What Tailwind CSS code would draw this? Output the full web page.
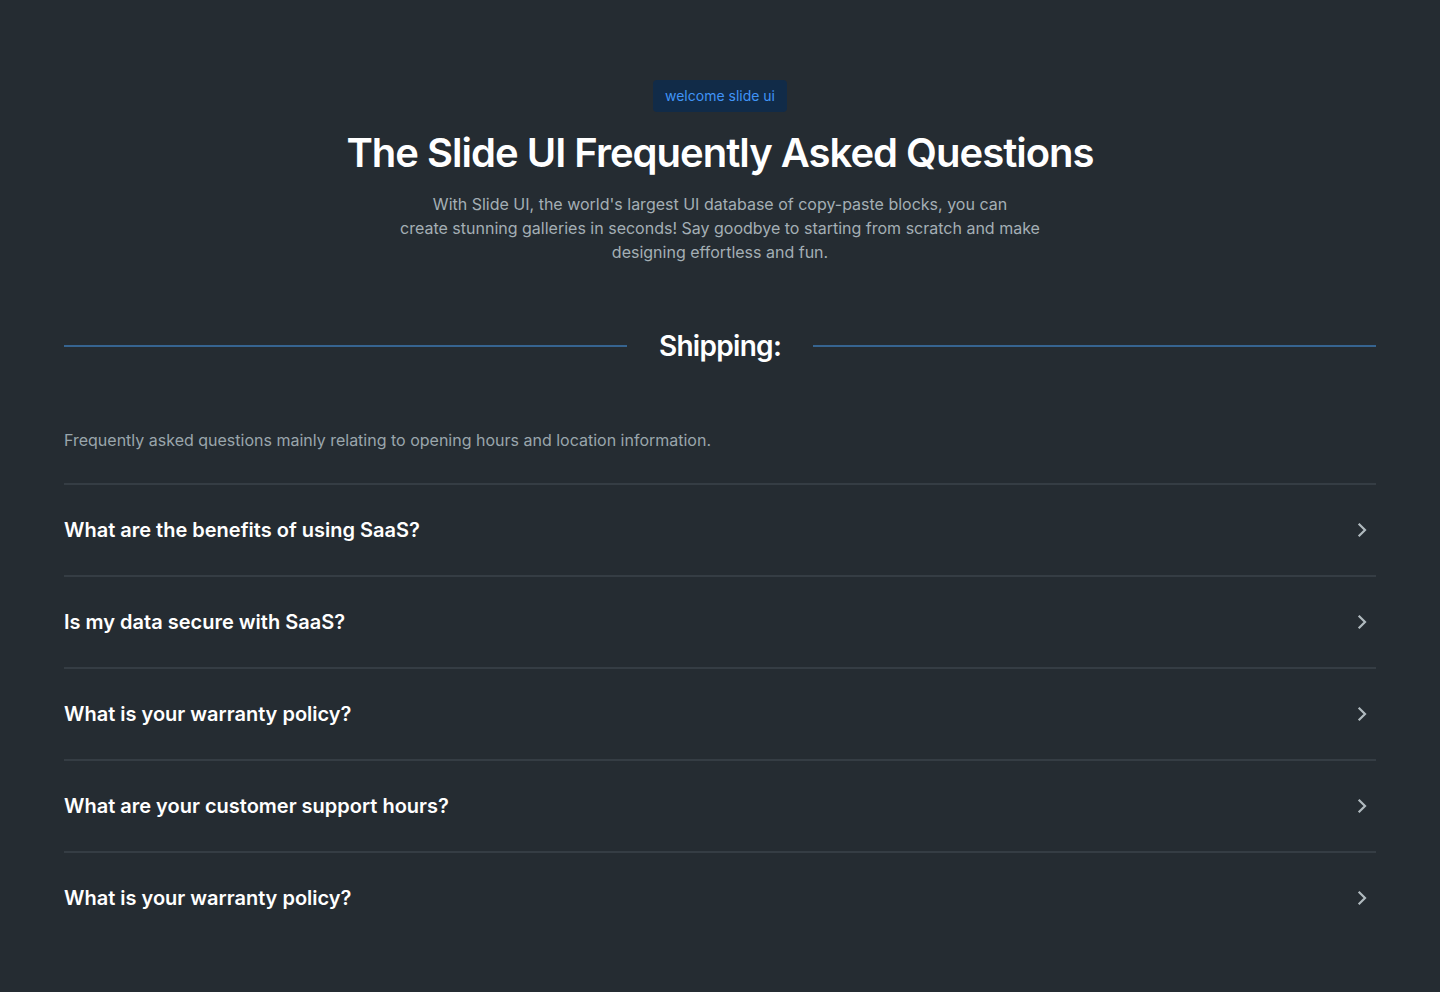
<!DOCTYPE html>
<html lang="en">
<head>
<meta charset="utf-8">
<meta name="viewport" content="width=device-width, initial-scale=1">
<title>Slide UI FAQ</title>
<script src="https://cdn.jsdelivr.net/npm/@tailwindcss/browser@4"></script>
</head>
<body class="min-h-screen bg-[#252c32] font-['Inter',sans-serif] text-white">
<main class="px-16 py-20">
  <header class="flex flex-col items-center text-center">
    <span class="rounded-sm bg-[#112b48] px-3 py-1.5 text-sm leading-5 text-[#4094f7]">welcome slide ui</span>
    <h1 class="mt-4 text-[40px] leading-[50px] font-semibold tracking-tight">The Slide UI Frequently Asked Questions</h1>
    <p class="mt-3.5 max-w-[656px] text-base text-[#a4afb5]">With Slide UI, the world's largest UI database of copy-paste blocks, you can<br>create stunning galleries in seconds! Say goodbye to starting from scratch and make designing effortless and fun.</p>
  </header>
  <div class="mt-16 flex items-center gap-8">
    <div class="h-0.5 flex-1 bg-[#366490]"></div>
    <h2 class="text-[28px] leading-9 font-semibold tracking-tight">Shipping:</h2>
    <div class="h-0.5 flex-1 bg-[#366490]"></div>
  </div>
  <p class="mt-16 mb-[31px] text-base text-[#9aa6ac]">Frequently asked questions mainly relating to opening hours and location information.</p>
  <div>
    <button type="button" class="flex w-full items-center justify-between border-t-2 border-[#353d44] py-[30px] text-left text-xl leading-[30px] font-semibold">What are the benefits of using SaaS?<svg class="mr-0.5 size-6 text-[#b0babf]" viewBox="0 0 24 24" fill="none" stroke="currentColor" stroke-width="2.2" aria-hidden="true"><path d="M8.7 5.7L15 12l-6.3 6.3"/></svg></button>
    <button type="button" class="flex w-full items-center justify-between border-t-2 border-[#353d44] py-[30px] text-left text-xl leading-[30px] font-semibold">Is my data secure with SaaS?<svg class="mr-0.5 size-6 text-[#b0babf]" viewBox="0 0 24 24" fill="none" stroke="currentColor" stroke-width="2.2" aria-hidden="true"><path d="M8.7 5.7L15 12l-6.3 6.3"/></svg></button>
    <button type="button" class="flex w-full items-center justify-between border-t-2 border-[#353d44] py-[30px] text-left text-xl leading-[30px] font-semibold">What is your warranty policy?<svg class="mr-0.5 size-6 text-[#b0babf]" viewBox="0 0 24 24" fill="none" stroke="currentColor" stroke-width="2.2" aria-hidden="true"><path d="M8.7 5.7L15 12l-6.3 6.3"/></svg></button>
    <button type="button" class="flex w-full items-center justify-between border-t-2 border-[#353d44] py-[30px] text-left text-xl leading-[30px] font-semibold">What are your customer support hours?<svg class="mr-0.5 size-6 text-[#b0babf]" viewBox="0 0 24 24" fill="none" stroke="currentColor" stroke-width="2.2" aria-hidden="true"><path d="M8.7 5.7L15 12l-6.3 6.3"/></svg></button>
    <button type="button" class="flex w-full items-center justify-between border-t-2 border-[#353d44] py-[30px] text-left text-xl leading-[30px] font-semibold">What is your warranty policy?<svg class="mr-0.5 size-6 text-[#b0babf]" viewBox="0 0 24 24" fill="none" stroke="currentColor" stroke-width="2.2" aria-hidden="true"><path d="M8.7 5.7L15 12l-6.3 6.3"/></svg></button>
  </div>
</main>
</body>
</html>
